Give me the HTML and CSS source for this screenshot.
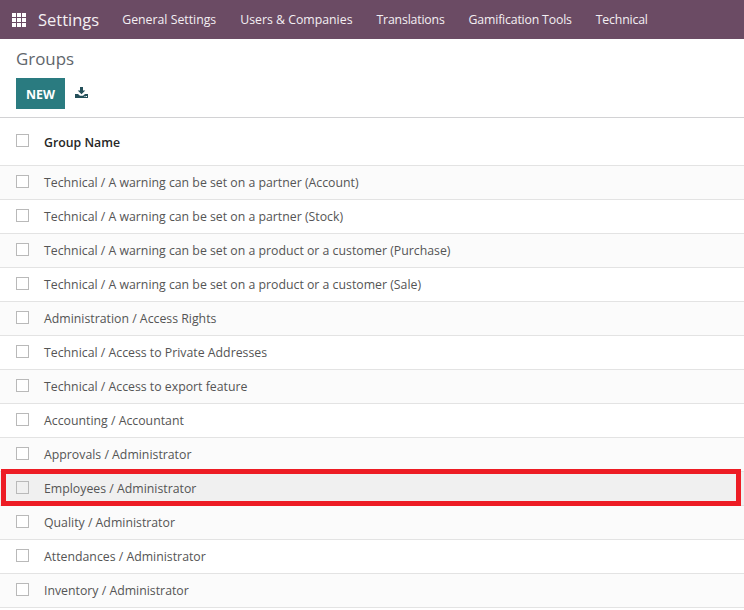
FILE: index.html
```html
<!DOCTYPE html>
<html lang="en">
<head>
<meta charset="utf-8">
<title>Groups</title>
<link rel="stylesheet" href="styles.css">
</head>
<body>
<nav class="navbar">
  <svg class="apps" viewBox="0 0 14 14" width="14" height="14" aria-hidden="true"><path fill="#fff" d="M0 0h4v4H0zM5 0h4v4H5zM10 0h4v4h-4zM0 5h4v4H0zM5 5h4v4H5zM10 5h4v4h-4zM0 10h4v4H0zM5 10h4v4H5zM10 10h4v4h-4z"/></svg>
  <span class="brand">Settings</span>
  <span class="menu">General Settings</span>
  <span class="menu">Users &amp; Companies</span>
  <span class="menu narrow">Translations</span>
  <span class="menu narrow">Gamification Tools</span>
  <span class="menu narrow">Technical</span>
</nav>
<header class="control">
  <div class="title">Groups</div>
  <div class="actions">
    <button class="new">NEW</button>
    <svg class="dl" viewBox="0 0 13 11" width="13" height="11" aria-hidden="true"><path fill="#24505a" d="M5 0h3v3.500h2.300L6.500 7.300 2.700 3.500H5z"/><path fill="#24505a" d="M0 7h3L5 8.700h3L10 7h3v4H0z"/><path fill="#fff" d="M9.500 9h1v1h-1zM11 9h1v1h-1z"/></svg>
  </div>
</header>
<div class="list">
  <div class="head"><span class="box"></span><span class="name">Group Name</span></div>
  <div class="row"><span class="box"></span><span>Technical / A warning can be set on a partner (Account)</span></div>
  <div class="row"><span class="box"></span><span>Technical / A warning can be set on a partner (Stock)</span></div>
  <div class="row"><span class="box"></span><span>Technical / A warning can be set on a product or a customer (Purchase)</span></div>
  <div class="row"><span class="box"></span><span>Technical / A warning can be set on a product or a customer (Sale)</span></div>
  <div class="row"><span class="box"></span><span>Administration / Access Rights</span></div>
  <div class="row"><span class="box"></span><span>Technical / Access to Private Addresses</span></div>
  <div class="row"><span class="box"></span><span>Technical / Access to export feature</span></div>
  <div class="row"><span class="box"></span><span>Accounting / Accountant</span></div>
  <div class="row"><span class="box"></span><span>Approvals / Administrator</span></div>
  <div class="row hover"><span class="box"></span><span>Employees / Administrator</span><span class="mark"></span></div>
  <div class="row"><span class="box"></span><span>Quality / Administrator</span></div>
  <div class="row"><span class="box"></span><span>Attendances / Administrator</span></div>
  <div class="row"><span class="box"></span><span>Inventory / Administrator</span></div>
</div>
</body>
</html>
```
FILE: styles.css
```css
html, body {
  margin: 0;
  padding: 0;
  background: #fff;
  overflow: hidden;
}
body {
  font-family: "Open Sans", "Noto Sans", sans-serif;
  font-size: 12.3px;
  color: #555;
}
.navbar {
  display: flex;
  align-items: center;
  height: 39px;
  padding-left: 12px;
  background: #6b4b64;
  color: #f4eff3;
}
.apps { flex: none; }
.brand {
  margin-left: 12px;
  margin-right: 23px;
  font-size: 16.5px;
}
.menu {
  margin-right: 24px;
  font-size: 12.3px;
}
.narrow { letter-spacing: -0.18px; }
.control {
  height: 79px;
  padding: 0 16px;
  box-sizing: border-box;
  border-bottom: 1px solid #d2d2d4;
}
.title {
  height: 39px;
  line-height: 40px;
  font-size: 16.9px;
  color: #5f666c;
}
.actions {
  display: flex;
  align-items: flex-start;
}
.new {
  width: 49px;
  height: 31px;
  padding: 2px 0 0;
  border: 0;
  background: #2a7b80;
  color: #fff;
  font: 700 12.4px "Open Sans", "Noto Sans", sans-serif;
}
.dl { margin: 9px 0 0 10px; }
.head, .row {
  display: flex;
  align-items: center;
  box-sizing: border-box;
  border-bottom: 1px solid #e3e3e3;
  padding-left: 16px;
}
.head {
  height: 48px;
  color: #262626;
}
.name {
  font-weight: 600;
  margin-top: 2px;
}
.row { height: 34px; position: relative; }
.row:nth-child(even) { background: #fbfbfb; }
.row.hover { background: #f0f0f0; }
.box {
  flex: none;
  width: 11px;
  height: 11px;
  margin-right: 15px;
  margin-top: -3px;
  border: 1px solid #b9b9b9;
  background: #fff;
}
.hover .box { background: #f0f0f0; }
.mark {
  position: absolute;
  left: 1px;
  top: -3px;
  width: 730px;
  height: 27px;
  border: 5px solid #ed1c24;
}
```
